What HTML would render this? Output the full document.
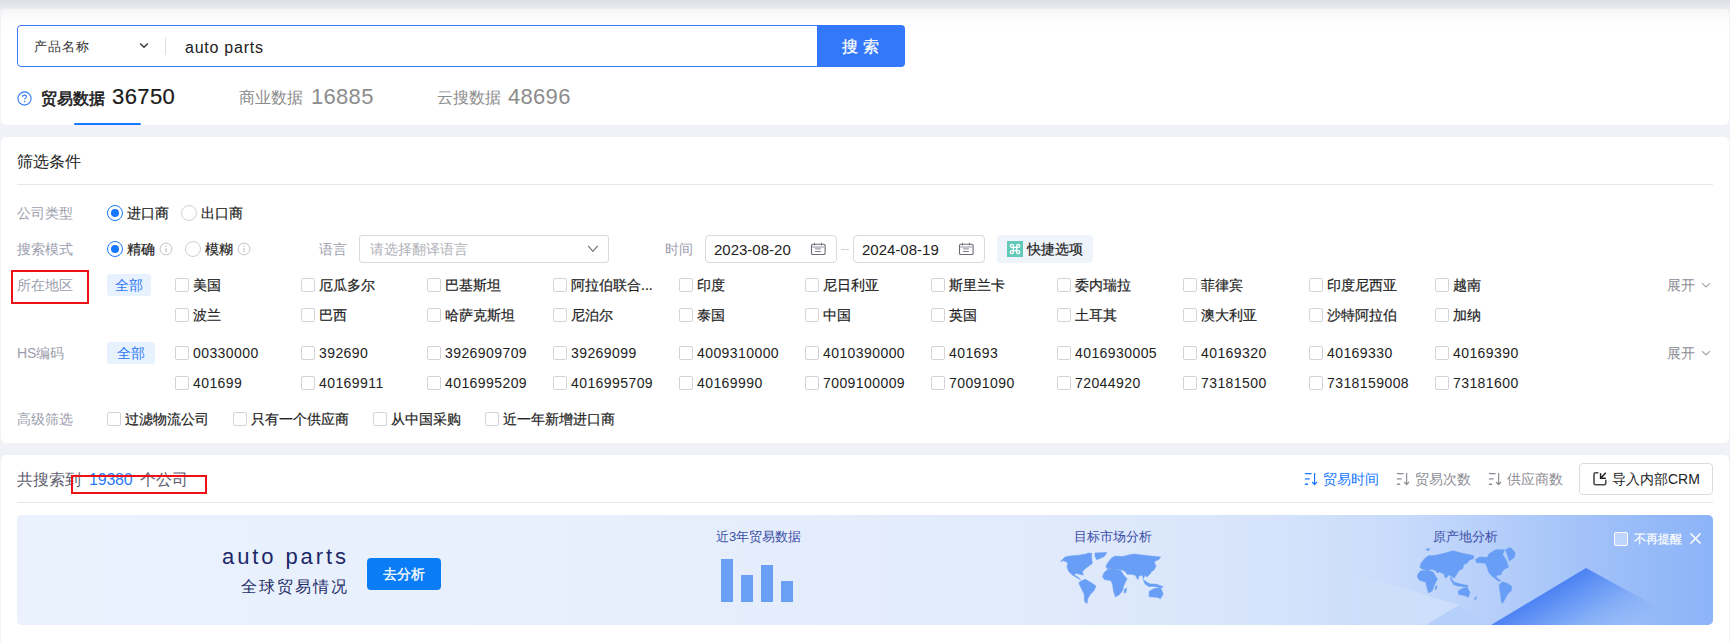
<!DOCTYPE html>
<html><head><meta charset="utf-8">
<style>
*{box-sizing:border-box;margin:0;padding:0}
html,body{width:1730px;height:642px;overflow:hidden}
body{position:relative;background:#f1f2f8;font-family:"Liberation Sans",sans-serif;color:#222;font-size:14px}
.a{position:absolute;white-space:nowrap}
.s{-webkit-text-stroke:0.2px currentColor}
.topbar{left:0;top:0;width:1730px;height:10px;background:linear-gradient(#dcdfe6,#eceef3)}
.card{position:absolute;background:#fff;border-radius:5px}
.t14{font-size:14px;line-height:20px;height:20px}
.t16{font-size:16px;line-height:22px;height:22px}
.lbl{color:#9a9aa3}
.cb{position:absolute;width:14px;height:14px;border:1px solid #d3d3d8;border-radius:2px;background:#fff}
.radio{position:absolute;width:16px;height:16px;border-radius:50%;border:1px solid #d0d0d5;background:#fff}
.radio.on{border:1.6px solid #1677ff}
.radio.on::after{content:"";position:absolute;left:3.4px;top:3.4px;width:8px;height:8px;border-radius:50%;background:#1677ff}
.tag{position:absolute;background:#e8f1fe;color:#2f7bf5;border-radius:3px;text-align:center;font-size:14px;line-height:22px;height:22px}
</style></head><body>
<div class="a topbar"></div>

<!-- card 1 -->
<div class="card" style="left:1px;top:9px;width:1728px;height:116px;background:linear-gradient(#f6f7f8 0px,#fdfdfd 12px,#fff 18px)"></div>
<div class="a" style="left:17px;top:25px;width:801px;height:42px;border:1px solid #3b7cf6;border-radius:4px 0 0 4px;background:#fff"></div>
<div class="a" style="left:817px;top:25px;width:88px;height:42px;background:#3478fa;border-radius:0 4px 4px 0"></div>
<div class="a" style="left:842px;top:36px;font-size:16px;line-height:22px;color:#fff;letter-spacing:5px;-webkit-text-stroke:0.25px #fff">搜索</div>
<div class="a" style="left:34px;top:36.5px;font-size:13px;line-height:20px;color:#333;letter-spacing:1.1px">产品名称</div>
<svg class="a" style="left:139px;top:42px" width="10" height="7" viewBox="0 0 10 7"><path d="M1.2 1.5 L5 5.2 L8.8 1.5" fill="none" stroke="#333" stroke-width="1.4"/></svg>
<div class="a" style="left:165px;top:37px;width:1px;height:18px;background:#e0e0e0"></div>
<div class="a" style="left:185px;top:37px;font-size:16px;line-height:22px;color:#222;letter-spacing:0.75px">auto parts</div>

<svg class="a" style="left:17px;top:91px" width="15" height="15" viewBox="0 0 15 15"><circle cx="7.5" cy="7.5" r="6.6" fill="none" stroke="#2f7bf5" stroke-width="1.1"/><path d="M5.6 5.9 C5.6 4.7 6.4 4.1 7.5 4.1 C8.6 4.1 9.4 4.8 9.4 5.8 C9.4 7 7.6 7.2 7.6 8.6" fill="none" stroke="#2f7bf5" stroke-width="1.1"/><circle cx="7.6" cy="10.6" r="0.75" fill="#2f7bf5"/></svg>
<div class="a" style="left:41px;top:87.5px;font-size:16px;line-height:22px;-webkit-text-stroke:0.55px #1a1a1a;color:#1a1a1a">贸易数据</div>
<div class="a" style="left:112px;top:84px;font-size:22px;line-height:26px;color:#1a1a1a;letter-spacing:0.4px;-webkit-text-stroke:0.2px #1a1a1a">36750</div>
<div class="a" style="left:74px;top:123px;width:67px;height:2px;background:#1677ff;border-radius:1px"></div>
<div class="a" style="left:239px;top:87px;font-size:16px;line-height:22px;color:#8c8c8c">商业数据</div>
<div class="a" style="left:311px;top:84px;font-size:22px;line-height:26px;color:#8c8c8c;letter-spacing:0.3px">16885</div>
<div class="a" style="left:437px;top:87px;font-size:16px;line-height:22px;color:#8c8c8c">云搜数据</div>
<div class="a" style="left:508px;top:84px;font-size:22px;line-height:26px;color:#8c8c8c;letter-spacing:0.3px">48696</div>

<!-- card 2 -->
<div class="card" style="left:1px;top:137px;width:1728px;height:306px"></div>
<div class="a" style="left:17px;top:151px;font-size:16px;line-height:22px;color:#222">筛选条件</div>
<div class="a" style="left:17px;top:184px;width:1696px;height:1px;background:#e8e8ec"></div>

<div class="a " style="left:17px;top:202.5px;font-size:14px;line-height:20px;color:#9c9eae;">公司类型</div>
<div class="radio on" style="left:107px;top:205px"></div>
<div class="a s" style="left:127px;top:202.5px;font-size:14px;line-height:20px;color:#222;">进口商</div>
<div class="radio" style="left:181px;top:205px"></div>
<div class="a s" style="left:201px;top:202.5px;font-size:14px;line-height:20px;color:#222;">出口商</div>
<div class="a " style="left:17px;top:238.5px;font-size:14px;line-height:20px;color:#9c9eae;">搜索模式</div>
<div class="radio on" style="left:107px;top:241px"></div>
<div class="a s" style="left:127px;top:238.5px;font-size:14px;line-height:20px;color:#222;">精确</div>
<svg class="a" style="left:159px;top:242px" width="14" height="14" viewBox="0 0 14 14"><circle cx="7" cy="7" r="5.9" fill="none" stroke="#c4c4cc" stroke-width="1"/><circle cx="7" cy="4.3" r="0.8" fill="#c4c4cc"/><rect x="6.4" y="5.9" width="1.2" height="4.4" fill="#c4c4cc"/></svg>
<div class="radio" style="left:185px;top:241px"></div>
<div class="a s" style="left:205px;top:238.5px;font-size:14px;line-height:20px;color:#222;">模糊</div>
<svg class="a" style="left:237px;top:242px" width="14" height="14" viewBox="0 0 14 14"><circle cx="7" cy="7" r="5.9" fill="none" stroke="#c4c4cc" stroke-width="1"/><circle cx="7" cy="4.3" r="0.8" fill="#c4c4cc"/><rect x="6.4" y="5.9" width="1.2" height="4.4" fill="#c4c4cc"/></svg>
<div class="a " style="left:319px;top:238.5px;font-size:14px;line-height:20px;color:#9c9eae;">语言</div>
<div class="a" style="left:359px;top:235px;width:250px;height:28px;border:1px solid #d9d9de;border-radius:3px;background:#fff"></div>
<div class="a " style="left:370px;top:238.5px;font-size:14px;line-height:20px;color:#b0b0b8;">请选择翻译语言</div>
<svg class="a" style="left:586px;top:244px" width="13" height="9" viewBox="0 0 13 9"><path d="M2.2 1.9 L6.9 7.3 L11.7 1.9" fill="none" stroke="#707078" stroke-width="1.2"/></svg>
<div class="a " style="left:665px;top:238.5px;font-size:14px;line-height:20px;color:#9c9eae;">时间</div>
<div class="a" style="left:705px;top:235px;width:132px;height:28px;border:1px solid #d9d9de;border-radius:4px;background:#fff"></div>
<div class="a " style="left:714px;top:238.5px;font-size:15px;line-height:21px;color:#222;">2023-08-20</div>
<svg class="a" style="left:806px;top:239px" width="24" height="20" viewBox="0 0 24 20"><rect x="5.5" y="5.3" width="13.6" height="10.2" rx="1.3" fill="none" stroke="#6b6b75" stroke-width="1.1"/><rect x="8" y="3.8" width="0.9" height="2.6" fill="#6b6b75"/><rect x="15" y="3.8" width="0.9" height="2.6" fill="#6b6b75"/><rect x="6" y="7.3" width="12.6" height="1.4" fill="#b4b4bc"/><rect x="9.2" y="8.6" width="5.6" height="2" fill="#b4b4bc"/><rect x="9" y="12" width="5.8" height="0.9" fill="#6b6b75"/></svg>
<div class="a" style="left:853px;top:235px;width:132px;height:28px;border:1px solid #d9d9de;border-radius:4px;background:#fff"></div>
<div class="a " style="left:862px;top:238.5px;font-size:15px;line-height:21px;color:#222;">2024-08-19</div>
<svg class="a" style="left:954px;top:239px" width="24" height="20" viewBox="0 0 24 20"><rect x="5.5" y="5.3" width="13.6" height="10.2" rx="1.3" fill="none" stroke="#6b6b75" stroke-width="1.1"/><rect x="8" y="3.8" width="0.9" height="2.6" fill="#6b6b75"/><rect x="15" y="3.8" width="0.9" height="2.6" fill="#6b6b75"/><rect x="6" y="7.3" width="12.6" height="1.4" fill="#b4b4bc"/><rect x="9.2" y="8.6" width="5.6" height="2" fill="#b4b4bc"/><rect x="9" y="12" width="5.8" height="0.9" fill="#6b6b75"/></svg>
<div class="a" style="left:841px;top:248.5px;width:8px;height:1px;background:#d0d0d5"></div>
<div class="a" style="left:997px;top:235px;width:96px;height:28px;background:#eff3fa;border-radius:4px"></div>
<svg class="a" style="left:1007px;top:241px" width="16" height="16" viewBox="0 0 16 16"><rect width="16" height="16" fill="#62c8b7"/><path d="M6.3 6.3 V4.9 A1.5 1.5 0 1 0 4.9 6.3 H11.1 A1.5 1.5 0 1 0 9.7 4.9 V11.1 A1.5 1.5 0 1 0 11.1 9.7 H4.9 A1.5 1.5 0 1 0 6.3 11.1 Z" fill="none" stroke="#fff" stroke-width="1.3"/></svg>
<div class="a s" style="left:1027px;top:238.5px;font-size:14px;line-height:20px;color:#222;">快捷选项</div>
<div class="a" style="left:11px;top:270px;width:78px;height:34px;border:2px solid #ee1118"></div>
<div class="a " style="left:17px;top:274.5px;font-size:14px;line-height:20px;color:#9c9eae;">所在地区</div>
<div class="tag" style="left:107px;top:274px;width:44px">全部</div>
<div class="cb" style="left:175px;top:278px"></div>
<div class="a s" style="left:193px;top:274.5px;font-size:14px;line-height:20px;color:#222;">美国</div>
<div class="cb" style="left:301px;top:278px"></div>
<div class="a s" style="left:319px;top:274.5px;font-size:14px;line-height:20px;color:#222;">厄瓜多尔</div>
<div class="cb" style="left:427px;top:278px"></div>
<div class="a s" style="left:445px;top:274.5px;font-size:14px;line-height:20px;color:#222;">巴基斯坦</div>
<div class="cb" style="left:553px;top:278px"></div>
<div class="a s" style="left:571px;top:274.5px;font-size:14px;line-height:20px;color:#222;">阿拉伯联合...</div>
<div class="cb" style="left:679px;top:278px"></div>
<div class="a s" style="left:697px;top:274.5px;font-size:14px;line-height:20px;color:#222;">印度</div>
<div class="cb" style="left:805px;top:278px"></div>
<div class="a s" style="left:823px;top:274.5px;font-size:14px;line-height:20px;color:#222;">尼日利亚</div>
<div class="cb" style="left:931px;top:278px"></div>
<div class="a s" style="left:949px;top:274.5px;font-size:14px;line-height:20px;color:#222;">斯里兰卡</div>
<div class="cb" style="left:1057px;top:278px"></div>
<div class="a s" style="left:1075px;top:274.5px;font-size:14px;line-height:20px;color:#222;">委内瑞拉</div>
<div class="cb" style="left:1183px;top:278px"></div>
<div class="a s" style="left:1201px;top:274.5px;font-size:14px;line-height:20px;color:#222;">菲律宾</div>
<div class="cb" style="left:1309px;top:278px"></div>
<div class="a s" style="left:1327px;top:274.5px;font-size:14px;line-height:20px;color:#222;">印度尼西亚</div>
<div class="cb" style="left:1435px;top:278px"></div>
<div class="a s" style="left:1453px;top:274.5px;font-size:14px;line-height:20px;color:#222;">越南</div>
<div class="cb" style="left:175px;top:308px"></div>
<div class="a s" style="left:193px;top:304.5px;font-size:14px;line-height:20px;color:#222;">波兰</div>
<div class="cb" style="left:301px;top:308px"></div>
<div class="a s" style="left:319px;top:304.5px;font-size:14px;line-height:20px;color:#222;">巴西</div>
<div class="cb" style="left:427px;top:308px"></div>
<div class="a s" style="left:445px;top:304.5px;font-size:14px;line-height:20px;color:#222;">哈萨克斯坦</div>
<div class="cb" style="left:553px;top:308px"></div>
<div class="a s" style="left:571px;top:304.5px;font-size:14px;line-height:20px;color:#222;">尼泊尔</div>
<div class="cb" style="left:679px;top:308px"></div>
<div class="a s" style="left:697px;top:304.5px;font-size:14px;line-height:20px;color:#222;">泰国</div>
<div class="cb" style="left:805px;top:308px"></div>
<div class="a s" style="left:823px;top:304.5px;font-size:14px;line-height:20px;color:#222;">中国</div>
<div class="cb" style="left:931px;top:308px"></div>
<div class="a s" style="left:949px;top:304.5px;font-size:14px;line-height:20px;color:#222;">英国</div>
<div class="cb" style="left:1057px;top:308px"></div>
<div class="a s" style="left:1075px;top:304.5px;font-size:14px;line-height:20px;color:#222;">土耳其</div>
<div class="cb" style="left:1183px;top:308px"></div>
<div class="a s" style="left:1201px;top:304.5px;font-size:14px;line-height:20px;color:#222;">澳大利亚</div>
<div class="cb" style="left:1309px;top:308px"></div>
<div class="a s" style="left:1327px;top:304.5px;font-size:14px;line-height:20px;color:#222;">沙特阿拉伯</div>
<div class="cb" style="left:1435px;top:308px"></div>
<div class="a s" style="left:1453px;top:304.5px;font-size:14px;line-height:20px;color:#222;">加纳</div>
<div class="a " style="left:1667px;top:274.5px;font-size:14px;line-height:20px;color:#8c8c94;">展开</div>
<svg class="a" style="left:1701px;top:282px" width="10" height="7" viewBox="0 0 10 7"><path d="M1 1.2 L5 5 L9 1.2" fill="none" stroke="#a0a0a8" stroke-width="1.1"/></svg>
<div class="a " style="left:17px;top:342.5px;font-size:14px;line-height:20px;color:#9c9eae;">HS编码</div>
<div class="tag" style="left:107px;top:342px;width:48px">全部</div>
<div class="cb" style="left:175px;top:346px"></div>
<div class="a " style="left:193px;top:342.5px;font-size:14px;line-height:20px;color:#222;letter-spacing:0.42px">00330000</div>
<div class="cb" style="left:301px;top:346px"></div>
<div class="a " style="left:319px;top:342.5px;font-size:14px;line-height:20px;color:#222;letter-spacing:0.42px">392690</div>
<div class="cb" style="left:427px;top:346px"></div>
<div class="a " style="left:445px;top:342.5px;font-size:14px;line-height:20px;color:#222;letter-spacing:0.42px">3926909709</div>
<div class="cb" style="left:553px;top:346px"></div>
<div class="a " style="left:571px;top:342.5px;font-size:14px;line-height:20px;color:#222;letter-spacing:0.42px">39269099</div>
<div class="cb" style="left:679px;top:346px"></div>
<div class="a " style="left:697px;top:342.5px;font-size:14px;line-height:20px;color:#222;letter-spacing:0.42px">4009310000</div>
<div class="cb" style="left:805px;top:346px"></div>
<div class="a " style="left:823px;top:342.5px;font-size:14px;line-height:20px;color:#222;letter-spacing:0.42px">4010390000</div>
<div class="cb" style="left:931px;top:346px"></div>
<div class="a " style="left:949px;top:342.5px;font-size:14px;line-height:20px;color:#222;letter-spacing:0.42px">401693</div>
<div class="cb" style="left:1057px;top:346px"></div>
<div class="a " style="left:1075px;top:342.5px;font-size:14px;line-height:20px;color:#222;letter-spacing:0.42px">4016930005</div>
<div class="cb" style="left:1183px;top:346px"></div>
<div class="a " style="left:1201px;top:342.5px;font-size:14px;line-height:20px;color:#222;letter-spacing:0.42px">40169320</div>
<div class="cb" style="left:1309px;top:346px"></div>
<div class="a " style="left:1327px;top:342.5px;font-size:14px;line-height:20px;color:#222;letter-spacing:0.42px">40169330</div>
<div class="cb" style="left:1435px;top:346px"></div>
<div class="a " style="left:1453px;top:342.5px;font-size:14px;line-height:20px;color:#222;letter-spacing:0.42px">40169390</div>
<div class="cb" style="left:175px;top:376px"></div>
<div class="a " style="left:193px;top:372.5px;font-size:14px;line-height:20px;color:#222;letter-spacing:0.42px">401699</div>
<div class="cb" style="left:301px;top:376px"></div>
<div class="a " style="left:319px;top:372.5px;font-size:14px;line-height:20px;color:#222;letter-spacing:0.42px">40169911</div>
<div class="cb" style="left:427px;top:376px"></div>
<div class="a " style="left:445px;top:372.5px;font-size:14px;line-height:20px;color:#222;letter-spacing:0.42px">4016995209</div>
<div class="cb" style="left:553px;top:376px"></div>
<div class="a " style="left:571px;top:372.5px;font-size:14px;line-height:20px;color:#222;letter-spacing:0.42px">4016995709</div>
<div class="cb" style="left:679px;top:376px"></div>
<div class="a " style="left:697px;top:372.5px;font-size:14px;line-height:20px;color:#222;letter-spacing:0.42px">40169990</div>
<div class="cb" style="left:805px;top:376px"></div>
<div class="a " style="left:823px;top:372.5px;font-size:14px;line-height:20px;color:#222;letter-spacing:0.42px">7009100009</div>
<div class="cb" style="left:931px;top:376px"></div>
<div class="a " style="left:949px;top:372.5px;font-size:14px;line-height:20px;color:#222;letter-spacing:0.42px">70091090</div>
<div class="cb" style="left:1057px;top:376px"></div>
<div class="a " style="left:1075px;top:372.5px;font-size:14px;line-height:20px;color:#222;letter-spacing:0.42px">72044920</div>
<div class="cb" style="left:1183px;top:376px"></div>
<div class="a " style="left:1201px;top:372.5px;font-size:14px;line-height:20px;color:#222;letter-spacing:0.42px">73181500</div>
<div class="cb" style="left:1309px;top:376px"></div>
<div class="a " style="left:1327px;top:372.5px;font-size:14px;line-height:20px;color:#222;letter-spacing:0.42px">7318159008</div>
<div class="cb" style="left:1435px;top:376px"></div>
<div class="a " style="left:1453px;top:372.5px;font-size:14px;line-height:20px;color:#222;letter-spacing:0.42px">73181600</div>
<div class="a " style="left:1667px;top:342.5px;font-size:14px;line-height:20px;color:#8c8c94;">展开</div>
<svg class="a" style="left:1701px;top:350px" width="10" height="7" viewBox="0 0 10 7"><path d="M1 1.2 L5 5 L9 1.2" fill="none" stroke="#a0a0a8" stroke-width="1.1"/></svg>
<div class="a " style="left:17px;top:408.5px;font-size:14px;line-height:20px;color:#9c9eae;">高级筛选</div>
<div class="cb" style="left:107px;top:412px"></div>
<div class="a s" style="left:125px;top:408.5px;font-size:14px;line-height:20px;color:#222;">过滤物流公司</div>
<div class="cb" style="left:233px;top:412px"></div>
<div class="a s" style="left:251px;top:408.5px;font-size:14px;line-height:20px;color:#222;">只有一个供应商</div>
<div class="cb" style="left:373px;top:412px"></div>
<div class="a s" style="left:391px;top:408.5px;font-size:14px;line-height:20px;color:#222;">从中国采购</div>
<div class="cb" style="left:485px;top:412px"></div>
<div class="a s" style="left:503px;top:408.5px;font-size:14px;line-height:20px;color:#222;">近一年新增进口商</div>
<!-- card 3 -->
<div class="card" style="left:1px;top:455px;width:1728px;height:200px"></div>
<div class="a " style="left:17px;top:469.0px;font-size:16px;line-height:22px;color:#5e6070;">共搜索到</div>
<div class="a " style="left:89px;top:469.0px;font-size:16px;line-height:22px;color:#2f7bf5;letter-spacing:-0.2px">19380</div>
<div class="a " style="left:140px;top:469.0px;font-size:16px;line-height:22px;color:#5e6070;">个公司</div>
<div class="a" style="left:71px;top:475px;width:136px;height:19px;border:2px solid #ee1118"></div>
<svg class="a" style="left:1304px;top:472px" width="15" height="14" viewBox="0 0 15 14"><rect x="0.8" y="0.9" width="7" height="1.3" rx="0.6" fill="#1677ff"/><rect x="0.8" y="6.3" width="5" height="1.3" rx="0.6" fill="#1677ff"/><rect x="0.8" y="11.6" width="3.4" height="1.3" rx="0.6" fill="#1677ff"/><path d="M10.6 1 V12.4 M8.2 10 L10.6 12.6 L13 10" fill="none" stroke="#1677ff" stroke-width="1.2"/></svg>
<div class="a " style="left:1323px;top:468.5px;font-size:14px;line-height:20px;color:#1677ff;">贸易时间</div>
<svg class="a" style="left:1396px;top:472px" width="15" height="14" viewBox="0 0 15 14"><rect x="0.8" y="0.9" width="7" height="1.3" rx="0.6" fill="#8c8c94"/><rect x="0.8" y="6.3" width="5" height="1.3" rx="0.6" fill="#8c8c94"/><rect x="0.8" y="11.6" width="3.4" height="1.3" rx="0.6" fill="#8c8c94"/><path d="M10.6 1 V12.4 M8.2 10 L10.6 12.6 L13 10" fill="none" stroke="#8c8c94" stroke-width="1.2"/></svg>
<div class="a " style="left:1415px;top:468.5px;font-size:14px;line-height:20px;color:#8c8c94;">贸易次数</div>
<svg class="a" style="left:1488px;top:472px" width="15" height="14" viewBox="0 0 15 14"><rect x="0.8" y="0.9" width="7" height="1.3" rx="0.6" fill="#8c8c94"/><rect x="0.8" y="6.3" width="5" height="1.3" rx="0.6" fill="#8c8c94"/><rect x="0.8" y="11.6" width="3.4" height="1.3" rx="0.6" fill="#8c8c94"/><path d="M10.6 1 V12.4 M8.2 10 L10.6 12.6 L13 10" fill="none" stroke="#8c8c94" stroke-width="1.2"/></svg>
<div class="a " style="left:1507px;top:468.5px;font-size:14px;line-height:20px;color:#8c8c94;">供应商数</div>
<div class="a" style="left:1579px;top:463px;width:134px;height:32px;border:1px solid #dcdce0;border-radius:4px;background:#fff"></div>
<svg class="a" style="left:1588px;top:468px" width="24" height="22" viewBox="0 0 24 22"><path d="M9.9 4.8 H7.6 Q6 4.8 6 6.4 V15.2 Q6 16.8 7.6 16.8 H16.2 Q17.8 16.8 17.8 15.2 V12.3" fill="none" stroke="#4a4a4a" stroke-width="1.6" stroke-linecap="round"/><path d="M17.8 4.8 L12.9 9.9 M12.6 5.2 V10.2 H17.8" fill="none" stroke="#222" stroke-width="1.5"/></svg>
<div class="a " style="left:1612px;top:468.5px;font-size:14px;line-height:20px;color:#222;">导入内部CRM</div>
<div class="a" style="left:17px;top:502px;width:1696px;height:1px;background:#e8e8ec"></div>
<div class="a" style="left:17px;top:515px;width:1696px;height:110px;border-radius:5px;overflow:hidden;background:#e6eefc"><svg style="position:absolute;left:0;top:0" width="1696" height="110" viewBox="0 0 1696 110"><defs><linearGradient id="bg" gradientUnits="userSpaceOnUse" x1="0" y1="0" x2="1696" y2="0"><stop offset="0" stop-color="#ebf2fe"/><stop offset="0.354" stop-color="#e7effd"/><stop offset="0.59" stop-color="#e2ebfb"/><stop offset="0.70" stop-color="#d9e6fb"/><stop offset="0.756" stop-color="#d3e2fb"/><stop offset="0.815" stop-color="#c8dbfb"/><stop offset="0.874" stop-color="#b5cefa"/><stop offset="0.904" stop-color="#a9c7f9"/><stop offset="0.963" stop-color="#96baf8"/><stop offset="1" stop-color="#8cb4f8"/></linearGradient><linearGradient id="vt" x1="0" y1="0" x2="0" y2="1"><stop offset="0" stop-color="#5a8ef5" stop-opacity="0.06"/><stop offset="1" stop-color="#ffffff" stop-opacity="0.12"/></linearGradient><linearGradient id="g1" gradientUnits="userSpaceOnUse" x1="1521" y1="81.5" x2="1573" y2="169"><stop offset="0" stop-color="#4c82f3"/><stop offset="0.3" stop-color="#6a9bf6" stop-opacity="0.85"/><stop offset="0.8" stop-color="#90b6f8" stop-opacity="0"/></linearGradient><linearGradient id="g3" gradientUnits="userSpaceOnUse" x1="1330" y1="0" x2="1442" y2="0"><stop offset="0" stop-color="#ffffff" stop-opacity="0"/><stop offset="1" stop-color="#ffffff" stop-opacity="0.25"/></linearGradient></defs><rect x="0" y="0" width="1696" height="110" fill="url(#bg)"/><path d="M1330 56 L1442 90 L1474 110 L1330 110 Z" fill="url(#g3)"/><path d="M1409 110 L1442 90 L1474 110 Z" fill="#b5d1fb"/><path d="M1474 110 L1569 53 L1673 110 Z" fill="url(#g1)"/></svg></div>
<div class="a " style="left:222px;top:544.0px;font-size:22px;line-height:26px;color:#1c2868;letter-spacing:2.9px">auto parts</div>
<div class="a " style="left:241px;top:576.0px;font-size:16px;line-height:22px;color:#232d66;letter-spacing:2px">全球贸易情况</div>
<div class="a" style="left:367px;top:558px;width:74px;height:32px;background:#0a7cf6;border-radius:4px;color:#fff;font-size:14px;line-height:32px;text-align:center;-webkit-text-stroke:0.3px #fff">去分析</div>
<div class="a " style="left:716px;top:528.0px;font-size:13px;line-height:18px;color:#3b4ea6;">近3年贸易数据</div>
<div class="a" style="left:721px;top:559px;width:12px;height:43px;background:#69a0f6"></div>
<div class="a" style="left:741px;top:575px;width:12px;height:27px;background:#69a0f6"></div>
<div class="a" style="left:761px;top:565px;width:12px;height:37px;background:#69a0f6"></div>
<div class="a" style="left:781px;top:581px;width:12px;height:21px;background:#69a0f6"></div>
<div class="a " style="left:1074px;top:528.0px;font-size:13px;line-height:18px;color:#3b4ea6;">目标市场分析</div>
<div class="a " style="left:1433px;top:528.0px;font-size:13px;line-height:18px;color:#3b4ea6;">原产地分析</div>
<svg class="a" style="left:1040px;top:540px" width="500" height="70" viewBox="1040 540 500 70"><g fill="#689ef5" stroke="#689ef5" stroke-width="0.6" stroke-linejoin="round"><path d="M1060.5 561.4 L1065.2 557 L1069.7 556.1 L1078.8 555.2 L1085.1 554.3 L1088.7 553 L1092 553.5 L1091.4 556.1 L1092.3 563.4 L1088.7 566.1 L1085.1 568.8 L1082.4 571.5 L1083.3 575.1 L1079.7 574.2 L1076.1 573.3 L1074.3 575.1 L1078.8 577.8 L1080.6 580.1 L1078.8 578.7 L1072.5 575.1 L1068.8 571.5 L1067 567 L1067.9 562.5 L1063.4 560.6 Z"/><path d="M1095 553 L1106.8 552.5 L1104.1 556.6 L1096.8 559.7 L1095 556.6 Z"/><path d="M1079.2 582.3 L1085.1 579.2 L1090.5 582.3 L1095.9 585.9 L1094.1 590.5 L1090.5 594.1 L1087.8 598.6 L1086.9 603.6 L1084.6 601.3 L1084.2 594.1 L1081.5 588.6 L1079.2 584.1 Z"/><path d="M1111.7 557.9 L1115.3 556.1 L1122.6 556.6 L1129.8 554.8 L1134.3 554.1 L1143.3 555.2 L1150.6 556.1 L1160.5 557 L1158.7 559.7 L1156 560.6 L1154.2 562.4 L1156 566.1 L1154.2 569.7 L1151.5 571.5 L1149.7 574.2 L1146.9 576.9 L1145.1 575.1 L1143.3 578.7 L1142.4 575.1 L1138.8 576 L1137.9 579.6 L1135.2 575.1 L1130.7 574.2 L1127.1 574.2 L1125.3 571.5 L1121.7 569.7 L1118.1 569.2 L1111.7 568.8 L1107.2 568.8 L1105.9 566.1 L1108.1 562.4 Z"/><path d="M1103.6 573.3 L1107.2 569.7 L1113.5 568.8 L1120.8 570.6 L1123.5 575.1 L1127.1 578.7 L1125.3 582.3 L1123.5 585.9 L1122.6 590.4 L1119 594.9 L1115.3 596.8 L1113.5 591.3 L1112.6 584.1 L1110.8 580.5 L1104.5 579.6 L1102.7 576.9 Z"/><path d="M1124.4 589.5 L1126.6 588.2 L1125.7 592.7 L1124.2 593.1 Z"/><path d="M1149.2 591.3 L1154.2 588.6 L1160.5 587.7 L1163.2 594 L1160.5 598.6 L1156.9 597.2 L1149.2 596.8 Z"/><path d="M1143.3 579.6 L1146.9 582.3 L1150.6 584.1 L1156 584.1 L1163.2 586.8 L1161.4 587.7 L1154.2 586.4 L1148.8 586.4 L1145.1 584.1 Z"/><path d="M1419.9 567.5 L1421.2 563 L1424.8 558.5 L1428.5 555.7 L1433.9 555.7 L1439.3 554.4 L1445.6 553 L1452.9 550.8 L1461 553 L1468.2 554.4 L1473.6 555.7 L1473.6 558.5 L1469.1 560.3 L1467.3 563 L1463.7 564.8 L1462.8 568.4 L1459.2 570.2 L1456.5 574.7 L1453.8 578.3 L1452 576.5 L1449.2 574.7 L1445.6 578.3 L1443.8 573.8 L1439.3 572 L1437.5 572.9 L1434.8 570.2 L1432.1 569.3 L1427.6 570.2 L1423 569.3 Z"/><path d="M1417.6 574.7 L1420.3 571.1 L1427.6 570.2 L1433 572 L1435.7 576.5 L1437.5 579.2 L1435.7 582 L1433.9 586.5 L1432.1 591 L1428.5 592.8 L1426.7 586.5 L1425.7 582 L1419.4 580.1 L1417.6 577.4 Z"/><path d="M1435.7 586.5 L1437 585.6 L1436.4 589.2 L1435 589.2 Z"/><path d="M1458.3 591 L1462.8 588.3 L1467.3 587.4 L1470 592.8 L1468.2 597.3 L1464.6 595.5 L1458.7 594.6 Z"/><path d="M1450.1 576.5 L1453.8 582 L1459.2 583.8 L1468.2 585.6 L1467.3 586.9 L1458.3 586 L1453.8 584.7 L1451 580.1 Z"/><path d="M1425.7 549.4 L1429.8 548.5 L1428.5 550.8 Z"/><path d="M1475.6 559.5 L1479.5 557 L1487.2 557.5 L1489.1 553.7 L1495.9 549.8 L1504.6 549.8 L1502.6 554.6 L1506.5 560.4 L1508.4 567.2 L1504.6 569.1 L1501.7 572 L1500.7 574.9 L1497.8 574.9 L1495.9 576.9 L1500.7 580.7 L1498.8 581.2 L1493 576.9 L1489.1 573 L1487.2 567.2 L1485.3 563.3 L1479.5 562.8 L1476.6 562.8 Z"/><path d="M1505.5 549.8 L1510.4 547.4 L1515.2 552.7 L1514.2 557.5 L1509.4 560.9 L1507.5 555.6 Z"/><path d="M1499.3 584.6 L1502.6 581.7 L1507.5 583.6 L1511.8 586.5 L1511.3 590.4 L1507.5 594.2 L1505.5 598.1 L1502.6 603.4 L1501.2 601 L1500.7 594.2 L1499.7 589.4 Z"/><path d="M1474.1 599.1 L1476.6 596.2 L1475.6 599.6 Z"/></g></svg>
<div class="a" style="left:1614px;top:532px;width:14px;height:14px;border:1.2px solid #fff;border-radius:2px;background:rgba(255,255,255,0.35)"></div>
<div class="a s" style="left:1634px;top:531.0px;font-size:12px;line-height:16px;color:#fff;">不再提醒</div>
<svg class="a" style="left:1689px;top:532px" width="13" height="13" viewBox="0 0 13 13"><path d="M1.5 1.5 L11.5 11.5 M11.5 1.5 L1.5 11.5" stroke="#fff" stroke-width="1.5"/></svg>
</body></html>
